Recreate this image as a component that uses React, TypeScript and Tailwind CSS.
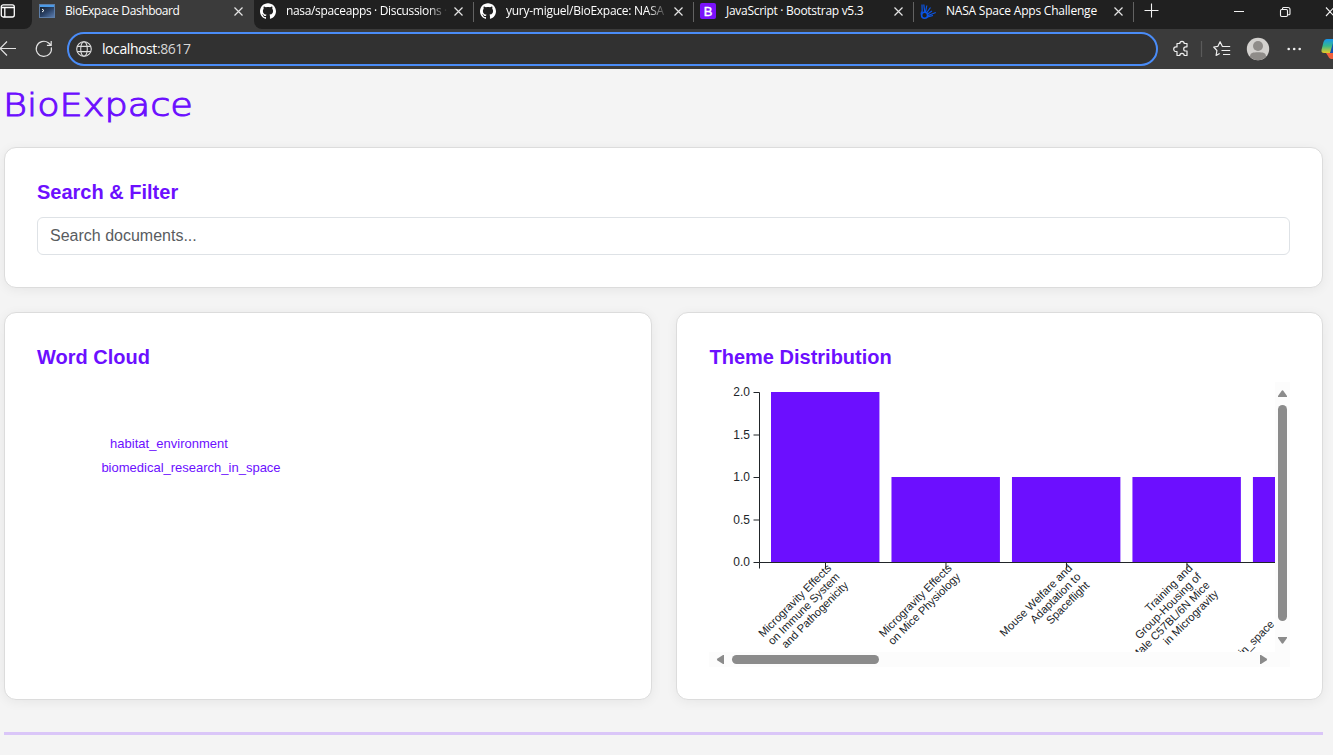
import React from "react";
import { SiGithub } from "react-icons/si";

const CloseIcon = () => (
  <svg width="9" height="9" viewBox="0 0 9 9" stroke="#e4e4e4" strokeWidth="1.2" className="shrink-0">
    <path d="M.5.5l8 8M8.5.5l-8 8" />
  </svg>
);

const TerminalIcon = () => (
  <svg width="16" height="14" viewBox="0 0 16 14" className="shrink-0">
    <defs>
      <linearGradient id="term" x1="0" y1="0" x2="1" y2="1">
        <stop offset="0" stopColor="#15202e" />
        <stop offset=".5" stopColor="#2b4266" />
        <stop offset="1" stopColor="#5a7cae" />
      </linearGradient>
    </defs>
    <rect width="16" height="14" fill="#5d7ea8" />
    <rect x="1" y="1" width="14" height="2" fill="#4b9be8" />
    <rect x="1" y="3" width="14" height="10" fill="url(#term)" />
    <path d="M3 5l2 1.500L3 8" stroke="#fff" fill="none" />
  </svg>
);

const BootstrapIcon = () => (
  <span className="flex h-4 w-4 shrink-0 items-center justify-center rounded-[2px] bg-[#7a12fb] font-['Liberation_Sans'] text-[13px] leading-none text-white [-webkit-text-stroke:0.4px_white]">
    B
  </span>
);

const SpaceAppsIcon = () => (
  <svg width="16" height="17" viewBox="0 0 16 17" fill="none" stroke="#0b55e6" strokeWidth="1.200" className="shrink-0">
    <circle cx="4.600" cy="12.300" r="3" strokeWidth="1.600" />
    <path d="M1 11.500L1.500 8.500M2.200 9.500L2 1.500M4.800 9.300L3.800 1.500M5.500 9.500L6.800 2.500M6.500 10L10.500 4.500M7.300 11.300L12 8M7.500 12.800L15.800 9.500M7 14.200L13 12.500" />
  </svg>
);

const tabs = [
  { title: "nasa/spaceapps · Discussions ·", icon: <SiGithub size={16} color="#fff" />, fade: true, ls: "tracking-[-0.34px]" },
  { title: "yury-miguel/BioExpace: NASA", icon: <SiGithub size={16} color="#fff" />, fade: true, ls: "tracking-[-0.26px]" },
  { title: "JavaScript · Bootstrap v5.3", icon: <BootstrapIcon />, fade: false, ls: "tracking-[-0.29px]" },
  { title: "NASA Space Apps Challenge", icon: <SpaceAppsIcon />, fade: false, ls: "tracking-[-0.21px]" },
];

function BrowserChrome() {
  return (
    <header className="h-[69px] overflow-hidden bg-[#3b3b3b] font-['Open_Sans',sans-serif] text-white">
      <div className="flex h-[29px] text-[12px] leading-[22px]">
        <div className="h-[29px] w-8 shrink-0 rounded-br-lg bg-[#202020] pt-1">
          <svg width="15" height="14" viewBox="0 0 15 14" fill="none" stroke="#fff" strokeWidth="1.300">
            <rect x="1.300" y=".8" width="13" height="12.200" rx="2" />
            <path d="M1.300 3.500h13M4.800 3.500v9.500" />
          </svg>
        </div>
        <div className="flex h-[22px] w-[222px] shrink-0 items-center pr-[11px] pl-[7px]">
          <TerminalIcon />
          <span className="ml-[10px] flex-1 tracking-[-0.42px] whitespace-nowrap">BioExpace Dashboard</span>
          <CloseIcon />
        </div>
        <div className="flex h-[29px] flex-1 rounded-bl-lg bg-[#202020]">
          {tabs.map((t) => (
            <div key={t.title} className="flex h-[22px] w-[220px] shrink-0 items-center pl-[6px]">
              {t.icon}
              <span
                className={`ml-[10px] w-[162px] shrink-0 whitespace-nowrap ${t.ls} ${t.fade ? "[mask-image:linear-gradient(to_right,#000_142px,transparent_162px)]" : ""}`}
              >
                {t.title}
              </span>
              <span className="ml-[5.500px] flex w-[9px] shrink-0">
                <CloseIcon />
              </span>
              <span className="mt-[2px] ml-auto h-[20px] w-px bg-[#626262]" />
            </div>
          ))}
          <svg width="199" height="24" viewBox="1134 0 199 24" fill="none" stroke="#f2f2f2" strokeWidth="1.100">
            <path d="M1144.500 10.500h14M1151.500 3.500v14M1234 11.500h10" />
            <rect x="1280.500" y="9.500" width="7" height="7" rx="1.200" />
            <path d="M1282.500 9.300v-.8a1 1 0 0 1 1-1h4.500a2 2 0 0 1 2 2v4.300a1 1 0 0 1-1 1h-1M1326 7.500l8 8.500M1334 7.500l-8 8.500" />
          </svg>
        </div>
      </div>
      <div className="flex h-10 items-center">
        <svg width="67" height="40" viewBox="0 29 67 40" fill="none" stroke="#e2e2e2" strokeWidth="1.200" className="shrink-0">
          <path d="M16 48.500H0M7 41.500l-7 7 7 7" />
          <path d="M51.300 47.300a7.600 7.600 0 1 1-3-4.600l2.700 2.300M51.200 41v4.300h-4.300" />
        </svg>
        <div className="flex h-[34px] w-[1091px] shrink-0 items-center rounded-full border-2 border-[#4a8cf7] bg-[#313131] pl-[7px]">
          <svg width="16" height="16" viewBox="0 0 16 16" fill="none" stroke="#dcdcdc" strokeWidth="1.100">
            <circle cx="8" cy="8" r="7.300" />
            <ellipse cx="8" cy="8" rx="3.300" ry="7.300" />
            <path d="M1.300 5.400h13.400M1.300 10.600h13.400" />
          </svg>
          <span className="ml-[10px] pb-px text-[14px] tracking-[-0.420px]">
            localhost<span className="text-[#d6d6d6]">:8617</span>
          </span>
        </div>
        <svg width="175" height="40" viewBox="1158 29 175 40" fill="none" stroke="#eee" strokeWidth="1.200" className="shrink-0">
          <path d="M1177 43.500h2.800a2.200 2.200 0 0 1 4.400 0h2.800v3.300h-1.200a2.100 2.100 0 0 0 0 4.200h1.200v4.500h-2.800a2.200 2.200 0 0 0-4.400 0H1177v-4h-1a2.300 2.300 0 0 1 0-4.600h1z" strokeLinejoin="round" />
          <path d="M1201.500 41v16" stroke="#5a5a5a" />
          <path d="M1224 46.500l-1.700-.2-2.200-4.600-2.200 4.600-4.200.7 3.200 3.500-.8 4.900 3.600-1.900M1222.500 46.500h7.700M1221.500 50.500h8.700M1223 54.500h7.200" strokeLinejoin="round" />
          <circle cx="1258" cy="49" r="11.200" fill="#d3d1ce" stroke="none" />
          <circle cx="1258" cy="46" r="5" fill="#8f8c89" stroke="none" />
          <path d="M1250 56.800c0-4 3-4.500 8-4.500s8 .5 8 4.500a11.200 11.200 0 0 1-16 0z" fill="#8f8c89" stroke="none" />
          <g fill="#eee" stroke="none">
            <circle cx="1288.700" cy="49" r="1.300" />
            <circle cx="1294.200" cy="49" r="1.300" />
            <circle cx="1299.700" cy="49" r="1.300" />
          </g>
          <defs>
            <linearGradient id="cp" x1="0" y1="0" x2="0" y2="1">
              <stop offset="0" stopColor="#1594ee" />
              <stop offset=".5" stopColor="#37b98c" />
              <stop offset="1" stopColor="#e8cb22" />
            </linearGradient>
          </defs>
          <path d="M1327 39h6v11l-3 3h-6q-3 0-2.500-3l2-8q1-3 3.500-3z" fill="url(#cp)" stroke="none" />
          <path d="M1333 43l-3 10h3z" fill="#134fb0" stroke="none" />
          <path d="M1326 53h7v6h-2q-2 0-3-3z" fill="#f0603c" stroke="none" />
        </svg>
      </div>
    </header>
  );
}

const bars = [
  { value: 2, label: ["Microgravity Effects", "on Immune System", "and Pathogenicity"] },
  { value: 1, label: ["Microgravity Effects", "on Mice Physiology"] },
  { value: 1, label: ["Mouse Welfare and", "Adaptation to", "Spaceflight"] },
  { value: 1, label: ["Training and", "Group-Housing of", "Male C57BL/6N Mice", "in Microgravity"] },
  { value: 1, label: ["in_space"], shift: { x: -67, y: 12 } },
];

function ThemeChart() {
  return (
    <svg width="566" height="270" viewBox="709 382 566 270" className="block overflow-hidden font-['Liberation_Sans',Arial,sans-serif]">
      {bars.map((b, i) => (
        <rect key={i} x={771 + i * 120.48} y={562 - b.value * 85} width="108.430" height={b.value * 85} fill="#6c0fff" />
      ))}
      <g stroke="#212529" fill="none">
        <path d="M753.500 392.500H759.500V562.500H753.500" />
        <path d="M759.500 568.500V562.500H1275" />
        <path d="M753.500 435h6M753.500 477.500h6M753.500 520h6" />
      </g>
      <g fontSize="12" fill="#212529" textAnchor="end">
        {["0.0", "0.5", "1.0", "1.5", "2.0"].map((t, i) => (
          <text key={t} x="750" y={566 - i * 42.5}>{t}</text>
        ))}
      </g>
      {bars.map((b, i) => (
        <g key={i} transform={`translate(${825.5 + i * 120.48} 562.5)`}>
          <path d="M0 0v6" stroke="#212529" />
          <g transform="rotate(-45)" fontSize="11.200" fill="#212529" textAnchor="end">
            {b.label.map((l, j) => (
              <text key={l} x={b.shift?.x ?? 0} y={9 + j * 12.1 + (b.shift?.y ?? 0)}>{l}</text>
            ))}
          </g>
        </g>
      ))}
    </svg>
  );
}

const card = "rounded-xl border border-[#dcdcdc] bg-white p-8 shadow-[0_2px_12px_rgba(0,0,0,0.06)]";
const heading = "text-[20px] leading-6 font-bold text-[#6c0fff]";

export default function App() {
  return (
    <div className="h-[755px] w-[1333px] overflow-hidden bg-[#f4f4f4] font-['Liberation_Sans',Arial,sans-serif]">
      <BrowserChrome />
      <main className="pr-[10px] pl-1">
        <h1 className="h-[78px] pt-[16px] font-['DejaVu_Sans'] text-[32px] leading-[40px] font-extralight text-[#6c0fff]">
          <span className="inline-block origin-left -translate-x-px scale-x-[1.145] [-webkit-text-stroke:1px_#6c0fff]">BioExpace</span>
        </h1>
        <section className={card}>
          <h2 className={heading}>Search &amp; Filter</h2>
          <input
            placeholder="Search documents..."
            className="mt-[13px] block h-[38px] w-full rounded-md border border-[#dee2e6] px-3 text-[16px] leading-6 placeholder:text-[#595c5f]"
          />
        </section>
        <div className="mt-6 grid grid-cols-2 gap-6">
          <section className={`${card} h-[388px]`}>
            <h2 className={heading}>Word Cloud</h2>
            <svg width="580" height="286" viewBox="37 382 580 286" className="mt-[13px] block" fill="#6c0fff" fontSize="13" textAnchor="middle">
              <text x="169" y="448">habitat_environment</text>
              <text x="191" y="472">biomedical_research_in_space</text>
            </svg>
          </section>
          <section className={`${card} h-[388px]`}>
            <h2 className={`${heading} pl-px`}>Theme Distribution</h2>
            <div className="mt-[13px] grid h-[285px] grid-cols-[566px_15px] grid-rows-[270px_15px]">
              <ThemeChart />
              <svg width="15" height="270" viewBox="0 0 15 270" fill="#8b8b8b">
                <path d="M0 0h15v270H0z" fill="#fcfcfc" />
                <path d="M3 15v-1L6.500 9q1-1.300 2 0L12 14v1z" />
                <rect x="3" y="23" width="9" height="216" rx="4.500" />
                <path d="M3 255v1L6.500 261q1 1.300 2 0L12 256v-1z" />
              </svg>
              <svg width="581" height="15" viewBox="0 0 581 15" fill="#8b8b8b" className="col-span-2">
                <path d="M0 0h581v15H0z" fill="#fcfcfc" />
                <path d="M15 3h-1L8.500 6.500q-1.300 1 0 2L14 12h1z" />
                <rect x="23" y="3" width="147" height="9" rx="4.500" />
                <path d="M551 3h1L557.500 6.500q1.300 1 0 2L552 12h-1z" />
              </svg>
            </div>
          </section>
        </div>
        <hr className="mt-8 h-[3px] border-0 bg-[#dac6f8]" />
      </main>
    </div>
  );
}
